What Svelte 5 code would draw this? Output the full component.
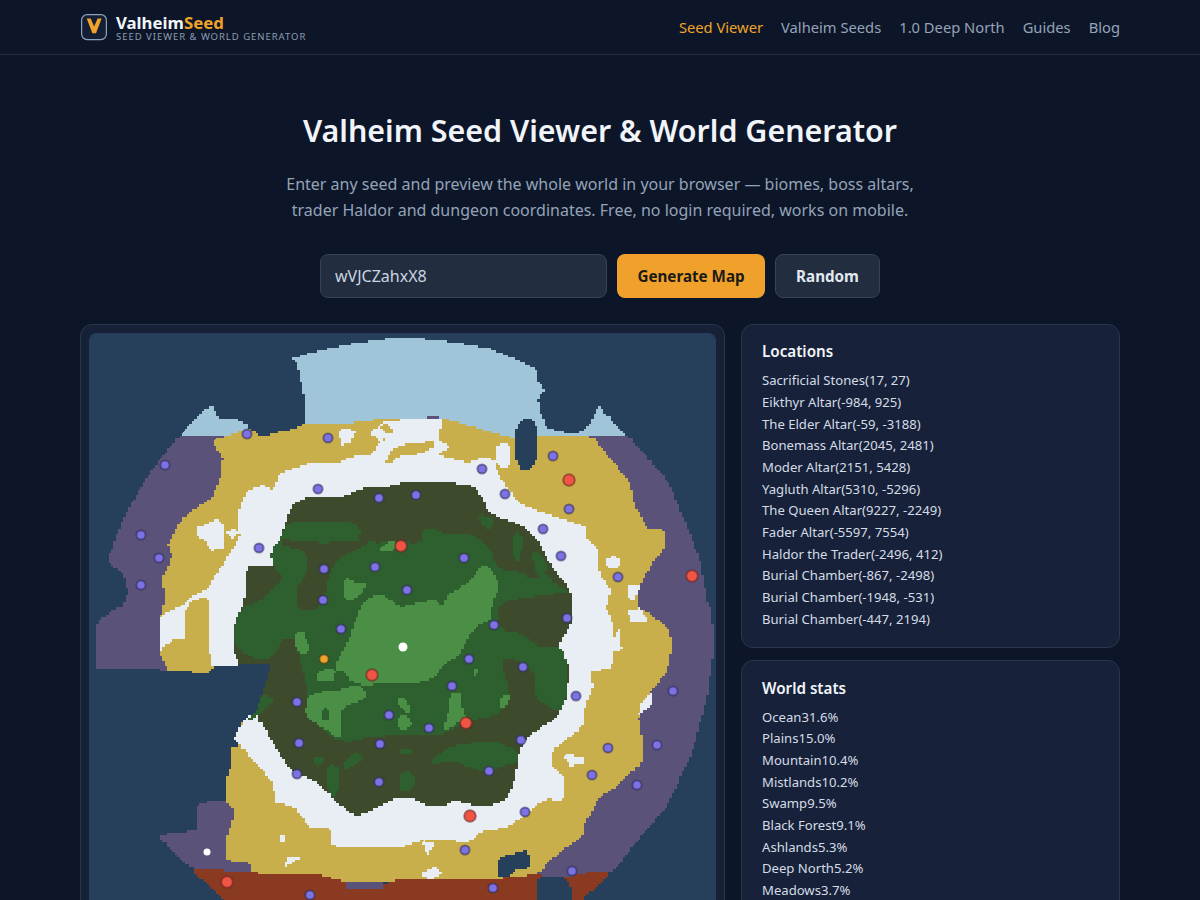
<script>
	const nav = ['Seed Viewer', 'Valheim Seeds', '1.0 Deep North', 'Guides', 'Blog'];

	const locations = [
		['Sacrificial Stones', '(17, 27)'],
		['Eikthyr Altar', '(-984, 925)'],
		['The Elder Altar', '(-59, -3188)'],
		['Bonemass Altar', '(2045, 2481)'],
		['Moder Altar', '(2151, 5428)'],
		['Yagluth Altar', '(5310, -5296)'],
		['The Queen Altar', '(9227, -2249)'],
		['Fader Altar', '(-5597, 7554)'],
		['Haldor the Trader', '(-2496, 412)'],
		['Burial Chamber', '(-867, -2498)'],
		['Burial Chamber', '(-1948, -531)'],
		['Burial Chamber', '(-447, 2194)']
	];

	const stats = [
		['Ocean', '31.6%'],
		['Plains', '15.0%'],
		['Mountain', '10.4%'],
		['Mistlands', '10.2%'],
		['Swamp', '9.5%'],
		['Black Forest', '9.1%'],
		['Ashlands', '5.3%'],
		['Deep North', '5.2%'],
		['Meadows', '3.7%']
	];

	// outer biomes, back to front, in page coordinates (see the map's viewBox)
	const outer = [
		['ice', '293,358 320,350 357,343 393,338 413,338 450,342 487,348 513,358 537,369 538,382 544,390 538,400 540,413 547,428 567,433 583,432 592,420 598,406 613,422 626,435 607,445 300,445 305,423 304,397 297,363'],
		['ice', '182,433 197,417 212,404 218,417 223,420 237,419 250,427 250,445 182,445'],
		['mist', '180,435 147,477 123,520 107,562 123,573 128,593 123,607 113,610 97,623 95,680 240,680 240,435'],
		['mist', '593,437 627,435 667,480 683,517 700,560 708,607 712,610 713,653 707,700 693,750 667,807 633,847 613,873 530,880 540,600 560,437'],
		['mist', '158,835 173,833 198,830 197,803 225,800 260,810 260,875 190,868'],
		['plains', '213,440 237,433 247,428 262,437 277,432 293,429 307,423 340,424 380,419 443,418 483,430 513,438 537,435 593,437 603,450 630,483 635,507 647,528 663,530 665,547 650,567 637,593 638,610 643,610 667,627 673,643 667,673 652,690 638,717 643,743 642,763 617,787 600,797 585,823 583,837 550,860 540,873 510,880 400,880 347,885 323,878 253,876 250,863 227,860 225,843 230,827 235,810 225,800 227,777 232,763 230,747 240,745 240,667 213,667 207,675 170,672 160,653 160,617 163,610 165,593 162,580 172,557 168,543 180,520 197,507 212,497 220,477 223,457 213,443'],
		['snow', '180,607 193,595 208,588 225,560 240,537 238,513 247,490 263,485 273,490 280,473 310,463 340,462 357,455 367,452 372,440 383,420 400,420 427,418 443,420 438,440 450,447 438,455 467,463 480,458 495,460 497,473 517,502 540,512 587,527 587,540 598,550 600,577 612,590 605,610 608,610 613,627 612,667 590,673 593,687 585,707 583,727 553,750 552,767 565,777 563,802 547,798 510,827 480,832 470,842 437,840 422,840 400,848 333,847 330,827 310,828 295,807 275,802 273,783 260,767 240,745 233,738 243,723 237,667 213,667 207,640 185,640 175,640 165,650 160,653 160,617 165,612'],
		['plains', '185,612 192,600 208,597 208,643 213,667 190,675 170,672 162,648 175,638 185,640'],
		['plains', '385,462 392,450 400,445 433,441 434,448 413,456 400,456 392,463'],
		['plains', '345,436 352,426 367,424 375,430 385,423 394,432 378,445 372,455 360,455 358,442'],
		['snow', '339,430 347,429 356,432 350,444 341,445'],
		['snow', '369,432 378,427 391,436 380,441'],
		['snow', '496,447 503,442 511,448 511,466 502,468 496,460'],
		['snow', '196,528 205,524 217,519 224,527 224,549 212,550 205,541 196,536'],
		['snow', '227,532 233,528 238,533 235,538 229,537'],
		['snow', '604,562 612,555 621,560 619,568 610,569'],
		['snow', '627,586 642,585 634,600 627,597'],
		['snow', '627,610 640,608 648,622 632,622'],
		['snow', '638,715 642,700 653,692 651,707'],
		['snow', '564,755 583,756 583,764 570,766'],
		['snow', '610,640 620,628 622,650 612,652'],
		['snow', '423,872 435,867 443,873 432,880 423,876'],
		['snow', '285,868 287,857 296,856 304,857 292,863'],
		['snow', '422,841 436,843 427,856'],
		['snow', '279,836 285,836 285,843 279,843'],
		['mist', '427,417 439,417 439,419 427,419']
	];

	// forest core, measured on a 3x crop whose corner sits at page (240, 480)
	const core = [
		['dark', '15,360 18,260 50,255 100,265 90,215 125,170 145,95 180,50 300,55 370,20 460,20 490,5 700,10 730,60 750,105 830,130 880,160 940,270 1000,340 995,440 955,490 960,530 990,545 975,700 880,755 835,810 830,880 800,975 680,975 650,955 590,990 490,940 400,990 340,1015 230,900 160,880 110,810 70,730 50,720 80,560 0,565 -30,480 0,400'],
		['green', '90,215 125,170 140,125 230,125 320,120 365,150 350,180 420,190 440,180 530,190 550,180 560,140 590,150 600,160 700,160 750,205 770,270 830,270 880,300 920,280 950,320 1000,335 880,350 800,360 770,390 775,450 850,460 900,510 950,490 985,545 975,700 920,680 880,640 890,600 880,570 810,530 780,540 810,640 805,680 760,710 690,720 600,770 560,760 390,770 300,790 240,740 195,700 205,640 185,560 165,470 125,480 95,545 25,530 -30,480 0,380 60,365 95,330 135,290 100,260'],
		['dark', '125,170 160,185 210,180 240,190 350,180 400,185 340,215 290,240 265,290 255,350 240,390 170,395 170,320 195,290 205,240 185,205 130,200'],
		['green', '715,100 765,120 750,160 720,125'],
		['green', '545,145 590,150 590,175 550,180'],
		['green', '820,150 850,170 840,250 820,240'],
		['green', '880,200 930,260 900,300 880,250'],
		['green', '555,860 620,800 690,790 750,780 835,810 830,860 800,850 750,880 680,860 640,840'],
		['green', '305,850 350,810 375,840 320,870'],
		['green', '255,870 280,850 300,870 295,950 265,940'],
		['green', '480,880 510,870 530,910 500,940 475,930'],
		['green', '220,830 250,825 250,850 230,860'],
		['green', '50,650 95,650 100,670 50,710 20,730'],
		['green', '480,808 512,808 517,826 480,826'],
		['light', '300,530 340,440 365,370 415,335 450,360 480,385 540,365 590,360 610,385 620,340 690,310 720,255 745,255 780,320 755,370 755,420 700,445 675,490 660,530 610,550 580,605 480,610 370,615 340,610 300,570 285,570 290,540'],
		['light', '232,570 290,565 294,602 232,607'],
		['green', '285,575 310,572 338,610 300,628 278,610'],
		['light', '205,640 300,630 340,615 370,620 380,660 310,680 300,720 310,770 290,775 270,750 230,735 200,705 195,690'],
		['green', '243,685 267,685 267,722 243,722'],
		['light', '168,455 192,455 197,485 214,495 207,518 180,522 163,490'],
		['light', '310,285 345,310 382,310 362,352 312,367'],
		['light', '468,655 492,655 517,690 505,702 478,680'],
		['light', '473,705 507,705 517,747 473,747'],
		['light', '630,638 667,638 667,700 682,710 630,747 608,747 625,700'],
		['light', '783,648 812,648 802,682 778,687'],
		['light', '697,568 717,568 717,584 697,584'],
		['light', '418,212 440,185 467,178 467,207 440,214']
	];

	const last = [
		['brown', '190,868 253,873 323,875 347,883 380,885 400,878 433,880 480,880 533,875 567,877 590,872 612,873 582,900 582,965 225,965 225,900'],
		['mist', '346,882 382,882 382,890 346,890'],
		['ocean', '80,668 170,670 207,674 213,667 272,662 263,693 257,710 240,725 233,737 230,747 225,800 197,803 198,830 173,833 158,835 80,835'],
		['ocean', '536,910 537,878 563,877 571,887 571,910'],
		['ocean', '498,877 497,860 505,855 515,853 525,850 530,855 530,868 515,870 510,877'],
		['ocean', '515,432 522,418 531,418 538,432 538,455 531,470 522,470 514,455']
	];

	const cell = 627 / 256;

	function parse(str) {
		return str.split(' ').map((p) => p.split(',').map(Number));
	}

	// corner cutting: a small cut keeps the sharp tips of the coast, 0.25 rounds them
	function smooth(pts, cut) {
		const out = [];
		pts.forEach((p, i) => {
			const q = pts[(i + 1) % pts.length];
			out.push([p[0] + (q[0] - p[0]) * cut, p[1] + (q[1] - p[1]) * cut]);
			out.push([q[0] + (p[0] - q[0]) * cut, q[1] + (p[1] - q[1]) * cut]);
		});
		return out;
	}

	// walks the outline and snaps it to the map's cells, so edges come out as stairs
	function stairs(pts) {
		const snap = (v, o) => o + Math.round((v - o) / cell) * cell;
		const path = [];
		let px = null;
		let py = null;
		pts.forEach((p, i) => {
			const q = pts[(i + 1) % pts.length];
			const n = Math.max(1, Math.ceil(Math.hypot(q[0] - p[0], q[1] - p[1]) / 1.5));
			for (let k = 0; k < n; k++) {
				const x = snap(p[0] + ((q[0] - p[0]) * k) / n, 89);
				const y = snap(p[1] + ((q[1] - p[1]) * k) / n, 333);
				if (x === px && y === py) continue;
				if (px !== null) path.push(`${x.toFixed(2)},${py.toFixed(2)}`);
				path.push(`${x.toFixed(2)},${y.toFixed(2)}`);
				px = x;
				py = y;
			}
		});
		return 'M' + path.join('L') + 'Z';
	}

	const coast = (pts) => stairs(smooth(pts, 0.1));
	const soft = (pts) => stairs(smooth(smooth(pts, 0.25), 0.25));

	const shapes = [
		...outer.map(([kind, s]) => [kind, coast(parse(s))]),
		...core.map(([kind, s]) => [kind, soft(parse(s).map(([x, y]) => [240 + x / 3, 480 + y / 3]))]),
		...last.map(([kind, s]) => [kind, coast(parse(s))])
	];

	const altars = [
		[569, 480], [401, 546], [692, 576], [372, 675], [466, 723], [470, 816], [227, 882]
	];
	const dungeons = [
		[247, 434], [328, 438], [165, 465], [141, 535], [159, 558], [141, 585], [318, 489], [379, 498],
		[416, 495], [482, 469], [505, 494], [553, 456], [569, 509], [543, 529], [561, 556], [618, 577],
		[259, 548], [324, 569], [375, 567], [464, 558], [407, 590], [323, 600], [341, 629], [494, 625],
		[567, 618], [469, 659], [523, 667], [452, 686], [297, 702], [389, 715], [429, 728], [576, 696],
		[673, 691], [299, 743], [380, 744], [521, 740], [657, 745], [608, 748], [297, 774], [379, 782],
		[489, 771], [592, 775], [637, 785], [525, 812], [465, 850], [572, 871], [310, 895], [493, 888]
	];
</script>

<header class="topbar">
	<div class="bar-inner">
		<a class="brand" href="#top">
			<svg class="logo" width="28" height="28" viewBox="0 0 28 28" fill="none" aria-hidden="true">
				<rect x="1.6" y="1.6" width="24.8" height="25" rx="5.5" fill="#141f33" stroke="#8ea3bd" stroke-width="1.2" />
				<path d="M6.7 5.6h4l3.4 7.9 3.5-7.9h4L16 20.3h-3.6z" fill="#f0a32a" />
			</svg>
			<span class="brand-text">
				<span class="brand-name">Valheim<em>Seed</em></span>
				<span class="brand-sub">SEED VIEWER &amp; WORLD GENERATOR</span>
			</span>
		</a>
		<nav>
			{#each nav as item, i}
				<a href="#top" class:active={i === 0}>{item}</a>
			{/each}
		</nav>
	</div>
</header>

<main>
	<section class="hero">
		<h1>Valheim Seed Viewer &amp; World Generator</h1>
		<p>Enter any seed and preview the whole world in your browser — biomes, boss altars,<br />trader Haldor and dungeon coordinates. Free, no login required, works on mobile.</p>
		<form class="seed-form" onsubmit={(e) => e.preventDefault()}>
			<input type="text" value="wVJCZahxX8" aria-label="Seed" />
			<button class="primary">Generate Map</button>
			<button class="secondary" type="button">Random</button>
		</form>
	</section>

	<div class="layout">
		<div class="map-card">
			<svg class="map" viewBox="89 333 627 627" aria-label="World map">
				{#each shapes as [kind, d]}
					<path class={kind} {d} />
				{/each}
				{#each dungeons as [cx, cy]}
					<circle class="pin" {cx} {cy} r="4.6" />
				{/each}
				{#each altars as [cx, cy]}
					<circle class="pin altar" {cx} {cy} r="5.8" />
				{/each}
				<circle class="pin orange" cx="324" cy="659" r="4.6" />
				<circle class="spot" cx="403" cy="647" r="4.5" />
				<circle class="spot" cx="207" cy="852" r="3.5" />
			</svg>
		</div>

		<aside>
			<section class="panel">
				<h2>Locations</h2>
				<ul>
					{#each locations as [name, pos]}
						<li>{name}{pos}</li>
					{/each}
				</ul>
			</section>
			<section class="panel">
				<h2>World stats</h2>
				<ul>
					{#each stats as [name, pct]}
						<li>{name}{pct}</li>
					{/each}
				</ul>
			</section>
		</aside>
	</div>
</main>

<style>
	:global(body) {
		background: #0d1628;
		color: #e8eef5;
		font-family: 'Noto Sans', sans-serif;
	}
	.topbar {
		height: 54px;
		border-bottom: 1px solid #232d3f;
	}
	.bar-inner {
		width: 1040px;
		height: 54px;
		margin: 0 auto;
		display: flex;
		align-items: center;
		justify-content: space-between;
	}
	.brand {
		display: flex;
		align-items: center;
		gap: 8px;
		text-decoration: none;
	}
	.logo {
		flex: none;
	}
	.brand-text {
		display: flex;
		flex-direction: column;
		padding-top: 2px;
	}
	.brand-name {
		font-size: 16.8px;
		font-weight: 700;
		line-height: 18px;
		color: #f1f5f9;
	}
	.brand-name em {
		font-style: normal;
		color: #f0a32a;
	}
	.brand-sub {
		font-size: 9.5px;
		line-height: 10px;
		letter-spacing: 0.97px;
		color: #8d9cb2;
	}
	nav {
		display: flex;
		gap: 18px;
	}
	nav a {
		font-size: 14.72px;
		color: #94a3b8;
		text-decoration: none;
	}
	nav a.active {
		color: #f0a32a;
	}
	main {
		width: 1040px;
		margin: 0 auto;
	}
	.hero {
		display: flex;
		flex-direction: column;
		align-items: center;
		padding-top: 54px;
	}
	h1 {
		margin: 0;
		font-size: 30.4px;
		line-height: 44px;
		font-weight: 600;
		color: #f1f5f9;
	}
	.hero p {
		margin: 18px 0 0;
		font-size: 16px;
		line-height: 26px;
		text-align: center;
		color: #94a3b8;
	}
	.seed-form {
		display: flex;
		gap: 10px;
		margin-top: 31px;
	}
	input {
		box-sizing: border-box;
		width: 287px;
		height: 44px;
		padding: 0 14px;
		background: #222e40;
		border: 1px solid #364256;
		border-radius: 8px;
		color: #cbd5e1;
		font: 16px 'Noto Sans', sans-serif;
	}
	button {
		height: 44px;
		border-radius: 8px;
		font: 700 15.2px 'Noto Sans', sans-serif;
	}
	.primary {
		width: 148px;
		background: #f0a12b;
		border: 0;
		color: #1c1a16;
	}
	.secondary {
		width: 105px;
		background: #222e40;
		border: 1px solid #364256;
		color: #e2e8f0;
	}
	.layout {
		display: grid;
		grid-template-columns: 645px 379px;
		gap: 16px;
		margin-top: 26px;
		align-items: start;
	}
	.map-card {
		padding: 8px;
		background: #162138;
		border: 1px solid #2a3649;
		border-radius: 12px;
	}
	.map {
		display: block;
		width: 627px;
		height: 627px;
		background: #26405c;
		border-radius: 8px;
	}
	.map path {
		shape-rendering: crispEdges;
	}
	.ocean { fill: #26405c; }
	.ice { fill: #a0c4d8; }
	.mist { fill: #5a5278; }
	.plains { fill: #c9ae4c; }
	.snow { fill: #e8eef3; }
	.dark { fill: #3e4a2c; }
	.green { fill: #2e5f2e; }
	.light { fill: #4a8f45; }
	.brown { fill: #8a3a20; }
	.pin {
		fill: #7d72e4;
		stroke: #2b2a55;
		stroke-opacity: 0.55;
		stroke-width: 2;
	}
	.pin.altar {
		fill: #ee5544;
		stroke: #6b2020;
	}
	.pin.orange {
		fill: #f0a32a;
		stroke: #3a3a20;
	}
	.spot {
		fill: #ffffff;
	}
	aside {
		display: flex;
		flex-direction: column;
		gap: 12px;
	}
	.panel {
		padding: 15.4px 20px 17px;
		background: #17223a;
		border: 1px solid #2a3649;
		border-radius: 12px;
	}
	h2 {
		margin: 0 0 8px;
		font-size: 15.2px;
		line-height: 22px;
		font-weight: 600;
		color: #f1f5f9;
	}
	ul {
		margin: 0;
		padding: 0;
		list-style: none;
	}
	li {
		font-size: 13.12px;
		line-height: 21.65px;
		color: #d5dce6;
	}
</style>
